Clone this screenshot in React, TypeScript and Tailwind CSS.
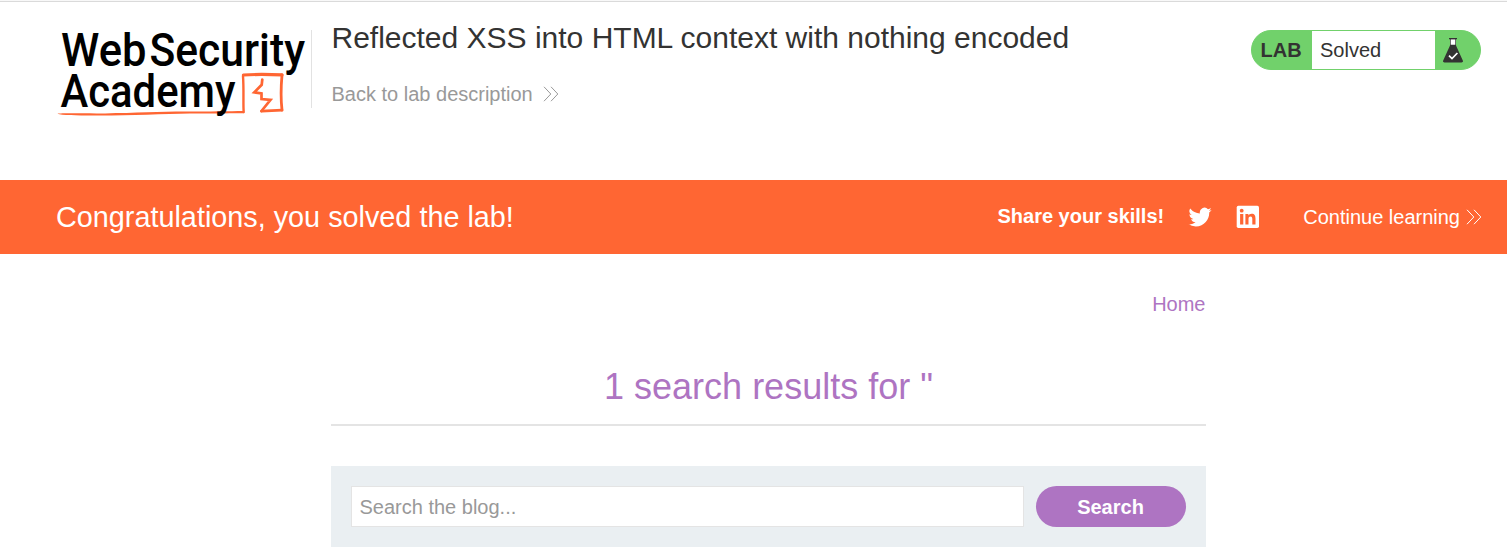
import React from "react";

function Logo() {
  return (
    <svg width="258" height="112" viewBox="56 12 258 112" className="-mr-0.5 -mt-3 block shrink-0 overflow-visible" role="img">
      <path d="M57.5 113.8 C62 112.9 85 113.6 105 113.4 C135 113 160 111.8 185 111.6 C210 111.5 230 111 243 110.9 L244 113.2 C225 113.4 205 113.4 190 113.6 C165 114.2 130 115.5 100 115.6 C80 115.7 62 115.4 57.5 113.8z" fill="#ff6633" />
      <g fill="none" stroke="#ff6633" strokeLinecap="round" strokeLinejoin="round">
        <path d="M243.7 112 C243 104 244 90 243 76" strokeWidth="2.4" />
        <path d="M243.4 75 C255 74.2 270 74.4 282 74.9" strokeWidth="3.2" />
        <path d="M282 75 C281 86 280.6 98 282 110" strokeWidth="2.8" />
        <path d="M282 110.2 L261.5 111.2" strokeWidth="2.8" />
        <path d="M262.3 79.5 L261.7 84.8 L254.3 92.4 L261.5 93.4 L261.5 99 L270.5 99.8 L261.5 111" strokeWidth="2.7" strokeLinejoin="miter" />
      </g>
      <g fill="#000" fontFamily="Roboto, sans-serif" fontWeight="500" fontSize="46.5">
        <text x="61" y="66" textLength="85.5" lengthAdjust="spacingAndGlyphs">Web</text>
        <text x="149.5" y="66" textLength="155.5" lengthAdjust="spacingAndGlyphs">Security</text>
        <text x="60.5" y="107" textLength="175" lengthAdjust="spacingAndGlyphs">Academy</text>
      </g>
    </svg>
  );
}

function Chevrons() {
  return (
    <svg width="16" height="16" viewBox="0 0 16 16" fill="none" stroke="currentColor" strokeWidth="1" className="block">
      <path d="M1 0.8 L7.8 8 L1 15.2 M8 0.8 L14.8 8 L8 15.2" />
    </svg>
  );
}

function Flask() {
  return (
    <svg width="20" height="25" viewBox="0 0 20 25" className="block">
      <path d="M7 1h6v6.5l6.8 15c.5 1.2 0 2-1.300 2H1.500c-1.300 0-1.800-.8-1.300-2L7 7.500z" fill="#333332" />
      <path d="M7.700 1.200h4.600v5.500H7.700z" fill="#fff" />
      <path d="M6 .6h8" stroke="#333332" strokeWidth="1.200" />
      <path d="M6 17.600l3 3 5.400-5.600" fill="none" stroke="#fff" strokeWidth="1.700" />
    </svg>
  );
}

function Twitter() {
  return (
    <svg width="24" height="24" viewBox="0 0 24 24" fill="currentColor" className="block">
      <path d="M23.640 4.940c-.85.380-1.760.630-2.720.740a4.730 4.730 0 0 0 2.080-2.620 9.500 9.500 0 0 1-3 1.150 4.730 4.730 0 0 0-8.070 4.310A13.440 13.440 0 0 1 2.170 3.580a4.730 4.730 0 0 0 1.460 6.320 4.700 4.700 0 0 1-2.140-.6v.06a4.740 4.740 0 0 0 3.800 4.640 4.700 4.700 0 0 1-2.140.080 4.740 4.740 0 0 0 4.420 3.290A9.500 9.500 0 0 1 .5 19.330a13.400 13.400 0 0 0 7.260 2.130c8.710 0 13.470-7.210 13.470-13.470 0-.2 0-.41-.01-.61a9.600 9.600 0 0 0 2.420-2.440z" />
    </svg>
  );
}

function LinkedIn() {
  return (
    <svg width="24" height="24" viewBox="0 0 24 24" className="block">
      <rect x="0.7" y="0.7" width="22.300" height="22.300" rx="1.700" fill="#fff" />
      <g fill="#ff6633">
        <circle cx="5.700" cy="5.700" r="1.900" />
        <path d="M4.100 9h3.200v10.600H4.100zM9.400 9h3v1.500c.6-1 1.700-1.800 3.200-1.800 3.200 0 3.900 2.100 3.900 4.900v6h-3.200v-5.200c0-1.300-.1-2.800-1.800-2.800s-2 1.400-2 2.700v5.300H9.400z" />
      </g>
    </svg>
  );
}

export default function App() {
  return (
    <div className="h-[556px] overflow-hidden bg-white font-['Liberation_Sans',Arial,sans-serif] text-xl leading-6 text-[#333332]">
      <div className="h-0.5 border-b border-[#dadada] bg-[#f8f8f8]" />
      <header className="flex h-[178px] items-start pl-14 pr-[26px] pt-[22px]">
        <Logo />
        <div className="-ml-px mt-1.5 h-[78px] w-px bg-[#e2e2e2]" />
        <div className="ml-[19.5px] flex-1">
          <h2 className="-mt-1 whitespace-nowrap text-[30px] leading-9">Reflected XSS into HTML context with nothing encoded</h2>
          <a className="mt-[26px] flex items-center gap-2.5 whitespace-nowrap text-[#999]">
            Back to lab description
            <Chevrons />
          </a>
        </div>
        <div className="mt-1.5 flex h-10 w-[230px] overflow-hidden rounded-[20px] border border-[#71d16b] bg-[#71d16b]">
          <span className="flex w-[60px] items-center pl-[8.5px] font-bold">LAB</span>
          <span className="flex w-[123px] items-center bg-white pl-2">Solved</span>
          <span className="flex items-center pl-2"><Flask /></span>
        </div>
      </header>

      <section className="flex h-[74px] items-center bg-[#ff6633] pl-14 pr-[25px] text-white">
        <h4 className="flex-1 text-[28.8px] leading-9">Congratulations, you solved the lab!</h4>
        <span className="pb-0.5 font-bold">Share your skills!</span>
        <span className="ml-6"><Twitter /></span>
        <span className="ml-6"><LinkedIn /></span>
        <a className="ml-[43px] flex items-center gap-1.5 whitespace-nowrap">
          Continue learning
          <Chevrons />
        </a>
      </section>

      <main className="ml-[331px] w-[875px] pt-[38px]">
        <nav className="flex justify-end pr-[0.5px] text-[#ae74c2]">Home</nav>
        <h1 className="mt-[38px] flex h-[72px] justify-center border-b-2 border-[#e4e4e4] pt-[11px] text-[36px] leading-[44px] text-[#ae74c2]">
          1 search results for "
        </h1>
        <form className="mt-10 flex h-[81px] gap-3 bg-[#eaeff2] p-5" onSubmit={(e) => e.preventDefault()}>
          <input
            className="h-[41px] w-[673px] border border-[#e4e4e4] bg-white pl-[7.5px] pr-2 pt-px placeholder:text-[#999]"
            placeholder="Search the blog..."
          />
          <button className="h-[41px] w-[150px] rounded-full bg-[#ae74c2] pr-px font-bold text-white">Search</button>
        </form>
      </main>
    </div>
  );
}
